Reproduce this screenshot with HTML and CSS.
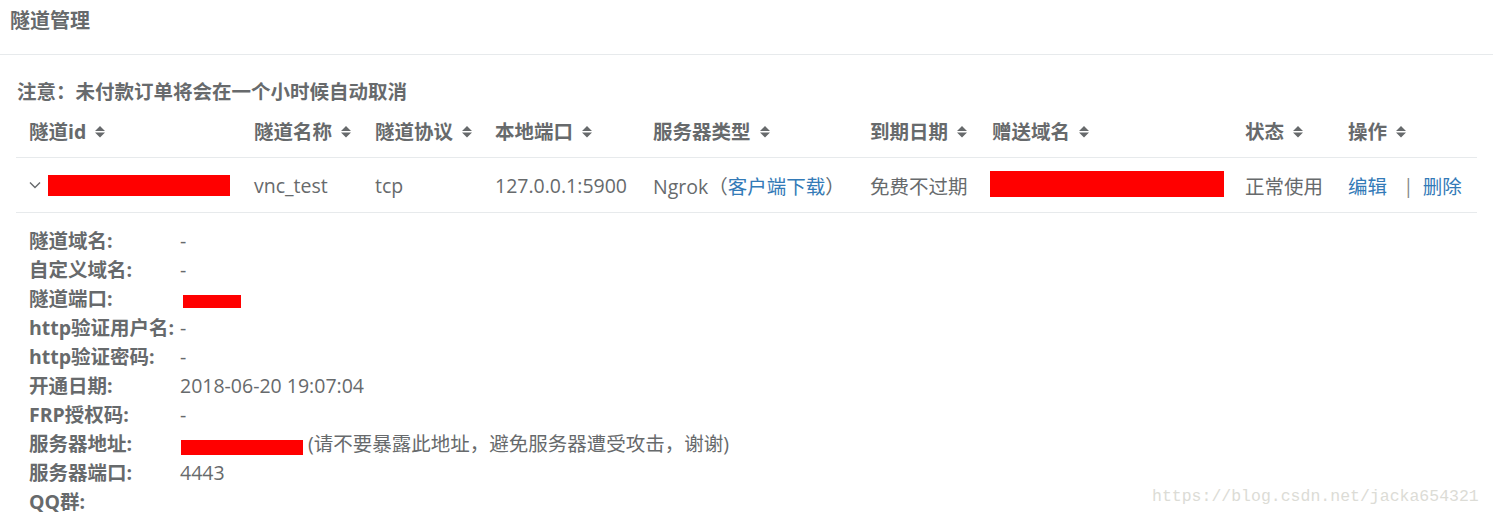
FILE: index.html
```html
<!DOCTYPE html>
<html>
<head>
	<meta charset="utf-8">
	<title>隧道管理</title>
	<link rel="stylesheet" href="styles.css">
</head>
<body>
	<!-- Box title -->
	<div class="box-title">
		<h5>隧道管理</h5>
	</div>

	<div class="box-content">
		<p class="notice">注意：未付款订单将会在一个小时候自动取消</p>

		<!-- Tunnel table -->
		<div class="grid head">
			<div class="cell">隧道id<svg class="sort" width="10" height="12" viewBox="0 0 10 12"><path d="M0 5 L5 0 L10 5 Z M0 6.6 L5 11.6 L10 6.6 Z"/></svg></div>
			<div class="cell">隧道名称<svg class="sort" width="10" height="12" viewBox="0 0 10 12"><path d="M0 5 L5 0 L10 5 Z M0 6.6 L5 11.6 L10 6.6 Z"/></svg></div>
			<div class="cell">隧道协议<svg class="sort" width="10" height="12" viewBox="0 0 10 12"><path d="M0 5 L5 0 L10 5 Z M0 6.6 L5 11.6 L10 6.6 Z"/></svg></div>
			<div class="cell">本地端口<svg class="sort" width="10" height="12" viewBox="0 0 10 12"><path d="M0 5 L5 0 L10 5 Z M0 6.6 L5 11.6 L10 6.6 Z"/></svg></div>
			<div class="cell">服务器类型<svg class="sort" width="10" height="12" viewBox="0 0 10 12"><path d="M0 5 L5 0 L10 5 Z M0 6.6 L5 11.6 L10 6.6 Z"/></svg></div>
			<div class="cell">到期日期<svg class="sort" width="10" height="12" viewBox="0 0 10 12"><path d="M0 5 L5 0 L10 5 Z M0 6.6 L5 11.6 L10 6.6 Z"/></svg></div>
			<div class="cell">赠送域名<svg class="sort" width="10" height="12" viewBox="0 0 10 12"><path d="M0 5 L5 0 L10 5 Z M0 6.6 L5 11.6 L10 6.6 Z"/></svg></div>
			<div class="cell">状态<svg class="sort" width="10" height="12" viewBox="0 0 10 12"><path d="M0 5 L5 0 L10 5 Z M0 6.6 L5 11.6 L10 6.6 Z"/></svg></div>
			<div class="cell">操作<svg class="sort" width="10" height="12" viewBox="0 0 10 12"><path d="M0 5 L5 0 L10 5 Z M0 6.6 L5 11.6 L10 6.6 Z"/></svg></div>
		</div>

		<div class="grid row">
			<div class="cell">
				<svg class="chevron" width="12" height="8" viewBox="0 0 12 8"><polyline points="1,1.5 6,6.5 11,1.5"/></svg>
				<span class="redact id-redact"></span>
			</div>
			<div class="cell">vnc_test</div>
			<div class="cell">tcp</div>
			<div class="cell">127.0.0.1:5900</div>
			<div class="cell">Ngrok（<a href="#">客户端下载</a>）</div>
			<div class="cell">免费不过期</div>
			<div class="cell"><span class="redact domain-redact"></span></div>
			<div class="cell">正常使用</div>
			<div class="cell"><a href="#">编辑</a><span class="sep">|</span><a href="#">删除</a></div>
		</div>

		<!-- Expanded details -->
		<div class="details">
			<div class="label">隧道域名:</div><div class="value">-</div>
			<div class="label">自定义域名:</div><div class="value">-</div>
			<div class="label">隧道端口:</div><div class="value"><span class="redact port-redact"></span></div>
			<div class="label">http验证用户名:</div><div class="value">-</div>
			<div class="label">http验证密码:</div><div class="value">-</div>
			<div class="label">开通日期:</div><div class="value">2018-06-20 19:07:04</div>
			<div class="label">FRP授权码:</div><div class="value">-</div>
			<div class="label">服务器地址:</div><div class="value"><span class="redact addr-redact"></span> (请不要暴露此地址，避免服务器遭受攻击，谢谢)</div>
			<div class="label">服务器端口:</div><div class="value">4443</div>
			<div class="label">QQ群:</div><div class="value"></div>
		</div>
	</div>

	<div class="watermark">https://blog.csdn.net/jacka654321</div>
</body>
</html>
```

FILE: styles.css
```css
body {
	margin: 0;
	background-color: #fff;
	color: #676a6c;
	font-family: "Open Sans", "Noto Sans CJK SC", sans-serif;
	font-size: 19.5px;
	overflow: hidden;
}

.box-title {
	height: 55px;
	border-bottom: 1px solid #e7eaec;
	padding-left: 10px;
	box-sizing: border-box;
}

.box-title h5 {
	margin: 0;
	padding-top: 8px;
	font-size: 20px;
	line-height: 26px;
	font-weight: 700;
	color: #676a6c;
}

.box-content {
	padding: 25px 16px 0 16px;
}

.notice {
	margin: 0;
	padding-left: 1px;
	font-weight: 700;
	line-height: 24px;
}

.grid {
	display: grid;
	grid-template-columns: 225px 121px 120px 158px 217px 122px 253px 103px 142px;
	border-bottom: 1px solid #e7eaec;
}

.cell {
	display: flex;
	align-items: center;
	padding-left: 13px;
	white-space: nowrap;
}

.head .cell {
	height: 53px;
	font-weight: 700;
}

.row .cell {
	height: 54px;
}

.sort {
	fill: #676a6c;
	margin-left: 9px;
	margin-top: 2px;
	flex-shrink: 0;
}

.chevron {
	fill: none;
	stroke: #676a6c;
	stroke-width: 1.4;
	margin-right: 7px;
}

a {
	color: #337ab7;
	text-decoration: none;
}

.sep {
	color: #8a8c8e;
	margin: 0 9px 0 16px;
}

.redact {
	display: inline-block;
	background-color: #f00;
}

.id-redact {
	width: 182px;
	height: 21px;
	margin-top: 1px;
}

.domain-redact {
	width: 234px;
	height: 26px;
	margin-left: -2px;
	margin-top: -2px;
}

.details {
	display: grid;
	grid-template-columns: 151px 1fr;
	padding: 13px 0 0 13px;
	line-height: 29px;
}

.label {
	font-weight: 700;
	white-space: nowrap;
}

.value {
	white-space: nowrap;
	min-height: 29px;
}

.port-redact {
	width: 58px;
	height: 13px;
	margin-left: 3px;
	vertical-align: -2px;
}

.addr-redact {
	width: 122px;
	height: 15px;
	margin-left: 1px;
	vertical-align: -4px;
}

.watermark {
	position: absolute;
	left: 1152px;
	top: 487px;
	font-family: "Liberation Mono", monospace;
	font-size: 16.5px;
	color: #dcdcd6;
}
```
